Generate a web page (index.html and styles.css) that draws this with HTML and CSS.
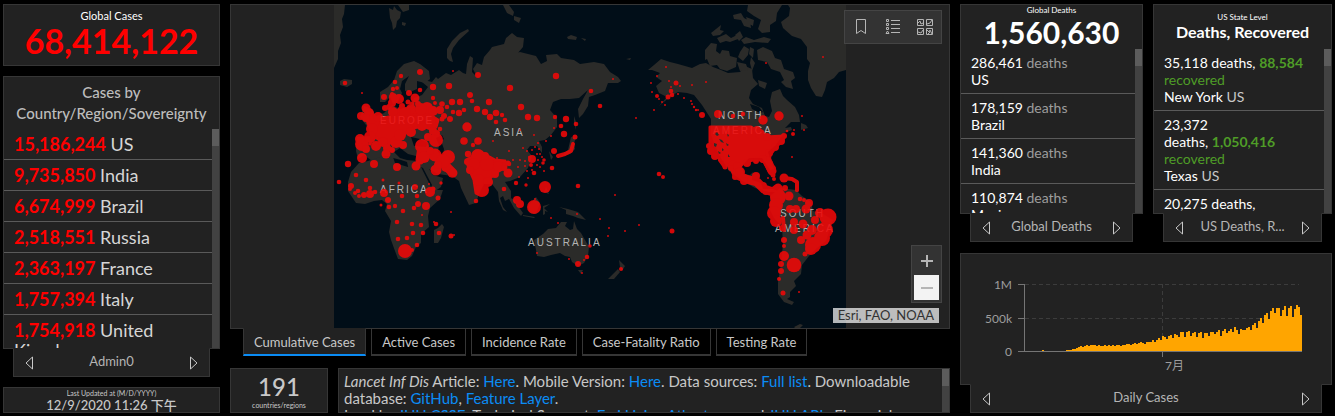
FILE: index.html
```html
<!DOCTYPE html>
<html lang="en">
<head>
    <meta charset="UTF-8">
    <meta name="viewport" content="width=device-width, initial-scale=1.0">
    <title>COVID-19 Dashboard</title>
    <link rel="stylesheet" href="styles.css">
</head>
<body>
<div class="dashboard">
    <div class="column left">
        <section class="card total">
            <h2 class="total-title">Global Cases</h2>
            <p class="total-number">68,414,122</p>
        </section>
        <section class="stack grow">
            <div class="card panel">
                <h2 class="panel-title">Cases by Country/Region/Sovereignty</h2>
                <div class="scroll">
                    <ul class="list cases">
                        <li><b>15,186,244</b> US</li>
                        <li><b>9,735,850</b> India</li>
                        <li><b>6,674,999</b> Brazil</li>
                        <li><b>2,518,551</b> Russia</li>
                        <li><b>2,363,197</b> France</li>
                        <li><b>1,757,394</b> Italy</li>
                        <li><b>1,754,918</b> United Kingdom</li>
                    </ul>
                    <div class="bar"></div>
                </div>
            </div>
            <nav class="switch">
                <button aria-label="Previous"><svg width="8" height="14" viewBox="0 0 8 14"><path d="M7.500 1v12L1 7z"/></svg></button>
                <span>Admin0</span>
                <button aria-label="Next"><svg width="8" height="14" viewBox="0 0 8 14"><path d="M.5 1v12L7 7z"/></svg></button>
            </nav>
        </section>
        <section class="card updated">
            <h2>Last Updated at (M/D/YYYY)</h2>
            <p>12/9/2020 11:26 下午</p>
        </section>
    </div>

    <div class="column middle">
        <section class="stack grow">
            <div class="card map">
                <svg class="world" viewBox="334 5 512 323">
                    <rect class="sea" x="334" y="5" width="512" height="323"/>
                    <g class="land">
                        <!-- greenland edge, svalbard, arctic islands, iceland -->
                        <path d="M334 5h11l-1 9-2 5 1 8-3 8 1 8-3 8v8l-4 9z"/>
                        <path d="M389 8l4 2 1-4 3 4 4 2-1 6-3 3-1 6-3 3-1-7-2-5zM398 5h11v5l-6 2zM402 22l4 1-1 3-3-1z"/>
                        <path d="M503 5h6l5 7-1 4-6-3zM514 16l7 2-2 5-5-3zM567 37l4-2 6 2-1 3-8-1zM581 38l5 1-1 2zM626 59l5-1-1 2z"/>
                        <path d="M468 29l-8 4-8 8-5 8v9l3 3 3 1-2-8 2-6 6-8 10-9zM340 81l4-2 8 1v4l-5 3-7-2z"/>
                        <!-- scandinavia -->
                        <path d="M380 102v-10l8-5 6-7 3-9 7-7 10-3 6 3 9 7 1 8-5 4-8-2v8l-7 3-5-1v-7l4-8-7 5-2 8 2 4-5 10-4 1-3-7-5 5z"/>
                        <!-- europe and asia -->
                        <path d="M356 151l1-14 13-1-1-7-9-12 4-11 8 3 4 7 8-3 8-8 8 4 12-4 2-7 8-3 6-8-6-5 2-2 8 2 4-5 2 2 8-6 5 2 8-5 4 3 3 1 1-10 3-8 3 2-1 14 5 5-4-8 4-6 5 2 2-8 6-7 2-3 12-3 2-6 6-5 5 4 7 1-1 9-6 7-6 1 9-3 8 2 8 2 5 8 6-3-1-6 11-1 4 4 13 2 6 4 14-2 10 2 6 8 8 5 3 4-3 2-10 0-3 8-10 4-6 2-1 9-5 8-4 4-1-9 5-10 5-9-9 8-9 1h-9l-8 3-3 8 7 8 0 9-6 8-6 5-6 1 3 6v6l-5-7-7 0-3 4 5 6-4 12-8 9-10 4-5 1 6 9v7l-6 3-2-5-3 2 3 9 4 5-4-2-4-9-1-9-6-8-8 0-5 10-3 9-7 2-8-17-2-7-7-5-14-2-9-5 4 6 10 3-2 9-10 7-8 2-6-11-8-14-2-9-6-2-8-2-6-2-8 2-7 3-8-6-6 4z"/>
                        <path d="M574 116l2 6v8l-2-8zM571 137l5 1-2 5 1 6-5 5-10 3 8-7zM549 151l4 6-2 3z"/>
                        <!-- africa and madagascar -->
                        <path d="M351 172l8-9 9-2 12-4h13l2 6 13 4 12-1 5 12 6 9 3 3h9l-3 9-10 9-2 8 1 11-8 7v9l-5 4-4 9-5 4-9-1-3-8-4-11-2-8 2-11-6-10 2-7-5-4-8 1-9 3-9-1-8-12v-9zM434 230l4-2 4-4 2 3-3 11-3 5h-4z"/>
                        <!-- indonesia, australia, new zealand -->
                        <path d="M508 197l5 2 10 14-2 3-7-8zM523 215l12 2-1 1-11-2zM528 206l8-9 4 6-4 11-6-1zM543 206l7-2-6 4 4 4-3-1v3l-2 1zM546 187l3 7-5-2zM559 207l9 2 10 3 8 8-8-2-5-2-7-2 0-4z"/>
                        <path d="M534 240l9-6 5-5 8-1 5-6h6l-2 4 5 4 3-1 1-8 3 8 4 4 4 7 4 7-1 9-4 7-6 3-6-4-2-5-5-1-5-3-9 2-7 2-7-1-1-6zM578 270h5l-2 4zM619 260l6 6-3 5-2-4zM618 269l2 3-6 7h-6z"/>
                        <!-- north america -->
                        <path d="M648 70l6-5 7-6 9 3 8 2 14 4 8-4 6-1 7 4 8 3 7 3 12-1 5-6 7 3 1 9 5 6-7 6-2 8 4 6 9 4 3 8 4 1 3-6-2-10 2-9 8-3 3 7 4 4 8 7 4 8 1 7-9 0-6 6 6-1 1 3-8 3-8 12-8 7 6 17-4 1-8-12h-13l-7 8 2 8 6 1 3-3-1 8 9 3 2 6 10 0 8 3-12 0-14-4-14-8-12-9-10-16-8-20 0-16-9-14-8-10-7-2-9-1-7 4-12 10 8-9-8-4-3-7 6-5-6-4 4-4-8-3z"/>
                        <path d="M801 123l5 2 2 3-7 2zM757 50l6-3 9 4 3 7 6 2 3 9 9 3 2 6-4 3 2 8-7-2-5-5 3-2-4-8-9-3-4-7-9-2zM705 50l6-7 6 1-1 7 4 3 2-4 7 1 1 5 7 2-1 9-9 4-7-2-3-4-7 1-3-7-2 1zM711 33l5-4 5-4-1 5 4 1-4 4-7 1zM717 38l9-4 5 4 6-3 1 4-8 3-4-1-6 2zM735 35l5-4 3 6-4 4zM741 40l5-3 8 3 10-3 7 2-3 4-13-1-11 2zM740 52l4-6 5 3-1 6-5 6-5-4zM750 47l4 2-1 9-4-4zM748 5h34l-5 8-1 8-6 4v7l-8 1-4-4 3-9-7-4-7-5zM733 15l8-2 3 5 6 3 1 7-7-2-3-6-7-1zM746 17l8 3-1 6-5-3zM737 62l9 2 2 6-8 1zM751 57l4 6-3 8-2-8zM758 80l9 3-2 6-6-3z"/>
                        <path d="M788 5h58v65l-7 2-5 6-7 4-2 8-3 7-6-1-5-8-3-8 0-9 2-8-3-4v-12l-6-8-9-3-9-8-2-6 8-6 1-8z"/>
                        <!-- south america -->
                        <path d="M770 196l10-8 16 2 6 6 9 6 2 9 10 3 10 6-3 9-4 12-9 7-8 8-7 9-1 9-7 7 2 5-6 6 0 5-3 2 7 3-2 3-8-3-6-8 0-12 3-18 2-20-1-17-8-9-4-8zM794 327l6-3 3 1-3 3-3 2z"/>
                    </g>
                    <g class="sea">
                        <path d="M436 138l6-3 2 4-3 2 3 8-1 6-5-3 1-7zM411 137l9 2 8 4-2 4-12-1zM394 152l6-4 8 6 8 2 1 5-10-1-7-2zM750 104l9 3 4 5-3 1-8-4zM421 167l2 1 9 17-1 2zM400 107l8-4 1-6-5 3z"/>
                    </g>
                    <g class="names">
                        <text x="380" y="124">EUROPE</text>
                        <text x="494" y="136">ASIA</text>
                        <text x="380" y="193">AFRICA</text>
                        <text x="528" y="246">AUSTRALIA</text>
                        <text x="718" y="119">NORTH</text>
                        <text x="713" y="134">AMERICA</text>
                        <text x="780" y="217">SOUTH</text>
                        <text x="775" y="232">AMERICA</text>
                    </g>
                    <g class="dots" id="dots">
                        <path d="M370 144l3-9 3-11 8-6 10-2 6-8 8 6 10-3 12 4 8 5-2 7-5 2-8-3-10 2-6 4-5 4-4 6-8 1-4 3-5-5-7-5z"/>
                        <path d="M466 160l6-3 4-6 8 3 11 6 10 1 1 6-9 5-6 5-4 7-1 8-5 3-5-2-2-13-4-9z"/>
                        <path d="M710 127l41 0 14 10 19-1-1 4-7 7-6 8-1 8 4 9-4-1-5-9-6-3-14 3-5 6-10-2-8-6-7-8-4-9z"/>
                        <path class="trail wide" d="M422 147l-2 13M435 155l10 10 8 8M733 165l4 10 9 4 11 3 7 7 9 3 5-4M767 160l5 11"/>
                        <path class="trail" d="M558 156l7-2 6-3 2-7M720 160l5 7M784 178l8 1 5 3 0 8M391 102l1-8M783 218l1 12"/>
                    </g>
                    <!-- bare patches in the western states -->
                    <path class="land" d="M715 134l2-2 2 3-2 1zM719 139l3 1 2 3-3-1zM714 143l3 1-1 3-2-1zM722 148l2 2-2 1zM726 143l3 2-2 1zM718 151l3 2-2 1zM727 134l2 1-1 2zM728 154l2 3-2 0z"/>
                </svg>
                <div class="tools">
                    <button aria-label="Bookmarks"><svg width="18" height="18" viewBox="0 0 18 18"><path d="M4.500 1.500h9v14L9 12.500l-4.500 3z"/></svg></button>
                    <button aria-label="Legend"><svg width="18" height="18" viewBox="0 0 18 18"><path d="M7 2.500h9M7 6.500h9M7 10.500h9M7 14.500h9M2.500 1.500h2v2h-2zM2.500 5.500h2v2h-2zM2.500 9.500h2v2h-2zM2 15.500h3L3.500 13z"/></svg></button>
                    <button aria-label="Basemaps"><svg width="18" height="18" viewBox="0 0 18 18"><path d="M1.500 1.500h6v6h-6zM10.500 1.500h6v6h-6zM1.500 10.500h6v6h-6zM10.500 10.500h6v6h-6zM2 5l2-2 1 3 2-1M11 6l3-1 2-3M2 14l3 1 2-3M11 12l2 2 1-2 2 4M12 16l2-2"/></svg></button>
                </div>
                <div class="zoom">
                    <button aria-label="Zoom in"><svg width="14" height="14" viewBox="0 0 14 14"><path d="M1 7h12M7 1v12"/></svg></button>
                    <button class="off" aria-label="Zoom out"><svg width="14" height="14" viewBox="0 0 14 14"><path d="M1 7h12"/></svg></button>
                </div>
                <div class="credits">Esri, FAO, NOAA</div>
            </div>
            <nav class="tabs">
                <button class="on">Cumulative Cases</button>
                <button>Active Cases</button>
                <button>Incidence Rate</button>
                <button>Case-Fatality Ratio</button>
                <button>Testing Rate</button>
            </nav>
        </section>
        <div class="footer">
            <section class="card count">
                <p>191</p>
                <h2>countries/regions</h2>
            </section>
            <section class="card scroll about">
                <p><i>Lancet Inf Dis</i> Article: <a href="#">Here</a>. Mobile Version: <a href="#">Here</a>. Data sources: <a href="#">Full list</a>. Downloadable database: <a href="#">GitHub</a>, <a href="#">Feature Layer</a>.<br>
                Lead by <a href="#">JHU CSSE</a>. Technical Support: <a href="#">Esri Living Atlas team</a> and <a href="#">JHU APL</a>. Financial Support:</p>
                <div class="bar"></div>
            </section>
        </div>
    </div>

    <div class="column right">
        <div class="pair grow">
            <section class="stack">
                <div class="card panel">
                    <div class="head deaths">
                        <h2>Global Deaths</h2>
                        <p>1,560,630</p>
                    </div>
                    <div class="scroll">
                        <ul class="list">
                            <li>286,461 <span class="grey">deaths</span><br>US</li>
                            <li>178,159 <span class="grey">deaths</span><br>Brazil</li>
                            <li>141,360 <span class="grey">deaths</span><br>India</li>
                            <li>110,874 <span class="grey">deaths</span><br>Mexico</li>
                        </ul>
                        <div class="bar"></div>
                    </div>
                </div>
                <nav class="switch">
                    <button aria-label="Previous"><svg width="8" height="14" viewBox="0 0 8 14"><path d="M7.500 1v12L1 7z"/></svg></button>
                    <span>Global Deaths</span>
                    <button aria-label="Next"><svg width="8" height="14" viewBox="0 0 8 14"><path d="M.5 1v12L7 7z"/></svg></button>
                </nav>
            </section>
            <section class="stack">
                <div class="card panel">
                    <div class="head states">
                        <h2>US State Level</h2>
                        <p>Deaths, Recovered</p>
                    </div>
                    <div class="scroll">
                        <ul class="list">
                            <li>35,118 deaths,&nbsp;<span class="green"><b>88,584</b> recovered</span><br>New York <span class="light">US</span></li>
                            <li>23,372 deaths,&nbsp;<span class="green"><b>1,050,416</b> recovered</span><br>Texas <span class="light">US</span></li>
                            <li>20,275 deaths,</li>
                        </ul>
                        <div class="bar"></div>
                    </div>
                </div>
                <nav class="switch">
                    <button aria-label="Previous"><svg width="8" height="14" viewBox="0 0 8 14"><path d="M7.500 1v12L1 7z"/></svg></button>
                    <span>US Deaths, R...</span>
                    <button aria-label="Next"><svg width="8" height="14" viewBox="0 0 8 14"><path d="M.5 1v12L7 7z"/></svg></button>
                </nav>
            </section>
        </div>
        <section class="stack">
            <div class="card">
                <svg class="chart" viewBox="0 0 370 130">
                    <path class="grid" d="M64 30.500h274M64 64.500h274M201.500 30v68"/>
                    <g id="days"></g>
                    <path class="axis" d="M57 30.500h6.500M57 64.500h6.500M57 97.500h284M63.500 30v68M201.500 98v5"/>
                    <text x="51" y="35" text-anchor="end">1M</text>
                    <text x="51" y="69" text-anchor="end">500k</text>
                    <text x="51" y="102" text-anchor="end">0</text>
                    <text x="204" y="116">7月</text>
                </svg>
            </div>
            <nav class="switch">
                <button aria-label="Previous"><svg width="8" height="14" viewBox="0 0 8 14"><path d="M7.500 1v12L1 7z"/></svg></button>
                <span>Daily Cases</span>
                <button aria-label="Next"><svg width="8" height="14" viewBox="0 0 8 14"><path d="M.5 1v12L7 7z"/></svg></button>
            </nav>
        </section>
    </div>
</div>
<script src="script.js"></script>
</body>
</html>
```
FILE: styles.css
```css
*{
    box-sizing: border-box;
}
body{
    margin: 0;
    background: #000;
    color: #c8c8c8;
    font-family: Lato, "Noto Sans CJK SC", sans-serif;
    font-size: 14px;
}
h2,p,ul{
    margin: 0;padding: 0;
    font-weight: normal;
    list-style: none;
}
button{
    padding: 0;
    border: 0;
    background: none;
    color: inherit;
    font: inherit;
    cursor: pointer;
}
svg{
    display: block;
}
a{
    color: #0b8cf5;
    text-decoration: none;
}
.dashboard{
    display: grid;
    grid-template-columns: 217fr 720fr 372fr;
    gap: 10px;
    height: 100vh;
    padding: 4px 3px 3px;
}
.column,.stack{
    display: flex;
    flex-direction: column;
    min-width: 0;
    min-height: 0;
}
.left{
    gap: 10px;
}
.middle{
    gap: 12px;
}
.right{
    gap: 11px;
}
.grow{
    flex: 1;
}
.card{
    background: #222;
    border: 1px solid #363636;
}
.panel{
    flex: 1;
    display: flex;
    flex-direction: column;
    min-height: 0;
}

/* headline number */
.total{
    height: 62px;
    text-align: center;
    color: #fff;
}
.total-title{
    padding-top: 4px;
    font-size: 11px;
    line-height: 14px;
}
.total-number{
    font-size: 34px;
    line-height: 36px;
    font-weight: bold;
    color: #f00;
}

/* lists */
.panel-title{
    padding: 5px 10px;
    font-size: 15px;
    line-height: 21px;
    font-weight: 500;
    text-align: center;
    color: #bdbdbd;
}
.scroll{
    flex: 1;
    display: flex;
    min-height: 0;
    overflow: hidden;
}
.bar{
    flex: none;
    width: 7px;
    background: #424242;
}
.bar::before{
    content: '';
    display: block;
    height: 17px;
    background: #5c5c5c;
}
.list{
    flex: 1;
    line-height: 17px;
    color: #fff;
}
.list li{
    padding: 5px 10px;
    border-bottom: 1px solid #5a5a5a;
}
.cases{
    font-size: 18px;
    line-height: 20px;
    color: #d6d6d6;
}
.cases b{
    color: #f00;
}
.grey{
    color: #9d9d9d;
}
.light{
    color: #c8c8c8;
}
.green{
    color: #4f9d27;
}
.head{
    height: 44px;
    text-align: center;
    color: #fff;
}
.head h2{
    font-size: 8px;
    line-height: 10px;
}
.deaths p{
    font-size: 30px;
    line-height: 34px;
    font-weight: bold;
}
.states{
    padding-top: 7px;
}
.states p{
    font-size: 16px;
    line-height: 20px;
    font-weight: bold;
}

/* strip under a panel that pages through its views */
.switch{
    position: relative;
    display: flex;
    align-items: center;
    justify-content: space-between;
    height: 29px;
    margin: -1px 10px 0;
    padding: 0 11px 3px;
    background: #222;
    border: 1px solid #363636;
    border-top-color: #222;
    font-size: 13px;
    color: #b5b5b5;
}
.switch button{
    padding-top: 3px;
}
.switch path{
    fill: none;
    stroke: #c8c8c8;
}

.updated{
    height: 26px;
    text-align: center;
}
.updated h2{
    font-size: 7px;
    line-height: 10px;
}
.updated p{
    font-size: 13px;
    line-height: 14px;
    font-weight: 500;
}

/* map */
.map{
    position: relative;
    flex: 1;
    min-height: 0;
}
.world{
    width: 100%;
    height: 100%;
}
.sea{
    fill: #010e18;
}
.land{
    fill: #2b2b29;
}
.names{
    fill: #b4b4b4;
    font-family: "Liberation Sans", sans-serif;
    font-size: 10px;
    letter-spacing: 2px;
}
.dots{
    fill: #f00808;
    opacity: .88;
}
.dots path{
    stroke: #f00808;
    stroke-width: 3px;
    stroke-linejoin: round;
    stroke-linecap: round;
}
.dots .trail{
    fill: none;
    stroke-width: 4px;
}
.dots .wide{
    stroke-width: 9px;
}
.tools,.zoom{
    position: absolute;
    right: 7px;
    display: flex;
    background: #333;
    border: 1px solid #444;
}
.tools{
    top: 5px;
}
.tools button{
    display: grid;
    place-items: center;
    width: 32px;
    height: 32px;
}
.tools path{
    fill: none;
    stroke: #b5b5b5;
}
.zoom{
    bottom: 25px;
    flex-direction: column;
    gap: 2px;
    padding: 2px;
}
.zoom button{
    display: grid;
    place-items: center;
    width: 25px;
    height: 25px;
}
.zoom path{
    stroke: #b5b5b5;
    stroke-width: 2px;
}
.zoom .off{
    background: #f3f3f3;
}
.credits{
    position: absolute;
    right: 10px;
    bottom: 5px;
    padding: 0 5px;
    background: rgba(255,255,255,.7);
    color: #323232;
    font-size: 13px;
    line-height: 15px;
}
.tabs{
    display: flex;
    gap: 5px;
    padding: 0 13px;
    margin-top: -1px;
    position: relative;
}
.tabs button{
    height: 28px;
    padding: 0 10px;
    border: 1px solid #363636;
    border-bottom-width: 2px;
    font-size: 13px;
}
.tabs .on{
    background: #222;
    border-top-color: #222;
    border-bottom-color: #0b8cf5;
}

.footer{
    display: grid;
    grid-template-columns: 98fr 612fr;
    gap: 10px;
    height: 45px;
}
.count{
    text-align: center;
}
.count p{
    padding-top: 4px;
    font-size: 24px;
    line-height: 27px;
    font-weight: 500;
}
.count h2{
    font-size: 7px;
    line-height: 10px;
}
.about p{
    flex: 1;
    padding: 4px 5px;
    font-size: 15px;
    line-height: 17px;
}

.pair{
    display: grid;
    grid-template-columns: 183fr 179fr;
    grid-template-rows: 100%;
    gap: 10px;
    min-height: 0;
}
.chart{
    width: 100%;
}
.chart rect{
    fill: #ffa500;
    shape-rendering: crispEdges;
}
.chart text{
    fill: #9d9d9d;
    font-size: 12px;
}
.grid,.axis{
    fill: none;
    stroke: #3c3c3c;
    stroke-dasharray: 4 3;
}
.axis{
    stroke: #757575;
    stroke-dasharray: none;
}
```
FILE: script.js
```js
const svgNS='http://www.w3.org/2000/svg'

function addShape(parent,name,attrs){
    let el=document.createElementNS(svgNS,name)
    for(let key in attrs){
        el.setAttribute(key,attrs[key])
    }
    parent.appendChild(el)
}

// x, y, radius
let places=[
    // europe, russia
    [345,83,2.3],[420,72,3],[401,76,2.2],[395,82,2.3],[393,89,2.2],[397,88,2],[384,97,3],[409,93,3],
    [420,90,2.3],[415,98,4.5],[433,87,3.2],[449,86,3.2],[453,71,1],[478,75,3],[470,95,3],[472,101,2.3],
    [433,98,2.2],[435,103,2],[442,104,2.8],[452,102,3.2],[460,102,3.2],[489,102,3.2],[477,109,3.2],
    [485,112,3.2],[459,113,3.2],[464,110,2.3],[453,112,2.3],[490,117,3.2],[496,113,3.3],[502,115,2.2],
    [505,120,2.3],[496,122,2.3],[510,88,3.2],[521,107,3.2],[528,117,3.2],[537,118,3.2],[556,76,3.2],
    [555,117,2.2],[566,119,3.2],[561,126,2.3],[564,134,3.2],[576,124,2.3],[575,137,2.5],[450,119,3],
    [444,116,3],[366,108,4.5],[361,116,4],[362,144,7],[385,108,3],[362,93,1],[399,99,5],[440,129,2.3],
    [436,140,7],[403,145,4],[392,150,3],[427,108,6],[447,107,2.3],[434,125,3],[369,113,5],[373,121,7],
    [378,117,5],[372,129,6],[370,137,6],[366,149,4],[360,139,5],[376,146,5],[383,142,5],[387,148,4],
    [396,142,6],[400,135,6],[411,132,5],[422,126,5],[393,112,5],[392,103,4],[402,106,3],[408,102,2.5],
    [411,109,5],[421,109,6],[433,111,5],[440,110,4],[442,119,2.5],[437,133,3],[433,131,4],[428,137,4],
    [393,97,4],[389,107,3],[412,104,2.5],[418,104,3],[405,113,6],[430,120,6],[415,121,6],[366,118,4],
    // middle east, central and east asia
    [467,127,4.7],[464,141,3.8],[478,141,3.8],[473,145,2.2],[422,146,7],[448,157,7],[435,155,6.5],
    [362,158,5],[374,164,4],[348,164,3.2],[386,154,4.5],[397,167,4],[416,166,4.5],[468,154,3.2],
    [478,156,7],[532,159,4],[554,151,3],[436,170,5.5],[452,173,4.5],[446,167,5],[508,173,4.5],
    [424,157,6],[443,161,7],[438,165,4],[430,151,4],[487,164,7],[498,166,5],[474,164,6],[482,190,7],
    [479,180,6],[488,182,5],[470,170,4],[467,162,3],[485,156,4],[504,168,3],[509,164,2.3],[495,174,4],
    [516,183,2.2],[526,185,1.7],[534,173,2.3],[552,168,2.3],[544,160,1.8],[543,163,1.8],[531,165,2],
    [508,163,2.5],[554,128,1],[534,135,1],[551,136,1],[546,141,1],[493,141,1],[538,143,1],[520,130,1],
    [509,151,1],[523,148,1],[527,151,1],[497,158,1],[520,160,1],[525,161,1],[532,150,1],[535,147,1],
    [539,149,1],[540,154,1],[542,157,1],[538,160,1],[537,165,1],[540,167,1],[532,170,1],[527,171,1],
    [525,166,1],[518,167,1],[519,177,1],[528,178,1],[544,171,1],[513,160,1],[537,154,1],[529,157,1],
    // africa
    [339,182,2.3],[351,186,3],[350,189,2],[356,175,2.3],[366,180,2.3],[358,191,2.3],[364,195,3],
    [359,196,2],[355,193,2],[370,194,4],[375,192,2.3],[370,188,2.3],[383,180,1.5],[384,193,4],
    [388,200,3],[389,207,2.3],[381,205,1.5],[395,206,2.2],[399,183,1.5],[402,196,2.3],[415,187,3],
    [417,196,2.3],[418,204,3],[414,208,2.3],[403,211,2.3],[426,206,4],[430,192,5],[433,189,2.5],
    [438,198,2.5],[422,215,1],[429,184,1],[441,183,1.7],[397,222,2.3],[412,224,2.3],[421,225,2.3],
    [413,233,2.3],[423,233,2.3],[407,238,2.3],[398,239,2.3],[417,245,2.3],[405,251,7],[412,250,2],
    [436,224,2.3],[434,222,1],[439,233,2.3],[451,236,2.5],[454,235,1],[451,212,1],
    // south-east asia, oceania, pacific
    [476,201,2.3],[504,189,2.3],[578,186,2.3],[545,187,6],[517,200,4],[520,204,4],[534,207,7],
    [535,199,1],[551,218,1],[558,223,1],[577,214,1],[537,253,1],[578,264,3],[569,259,1],[584,260,1],
    [587,257,2.3],[590,246,1.8],[582,273,1],[659,174,2.3],[663,177,2],[615,195,1],[600,219,1],
    [609,228,1],[608,236,1],[625,231,1],[639,225,1],[672,231,2.5],[621,269,2],
    // north america
    [591,91,2.3],[600,106,2.3],[613,79,1],[666,67,1],[657,76,1],[669,81,1],[651,83,1],[676,83,2.5],
    [680,86,1],[692,85,1],[706,82,1],[671,91,2.3],[671,87,1],[652,92,1],[657,96,2],[668,97,2.5],
    [672,95,2.3],[678,94,1],[659,99,1],[662,102,1],[665,105,1],[654,110,1],[684,98,1],[691,101,1],
    [692,104,1],[694,107,1.2],[696,110,1.2],[698,110,1],[702,115,3],[718,114,4],[733,116,2.3],
    [743,114,2.3],[763,120,4.7],[779,116,4.7],[802,116,1],[766,63,1],[823,57,1],[636,118,1],
    [792,157,1],[804,130,1],[787,131,1.3],[793,134,2],[794,130,1],[757,130,4],[725,167,2.5],[731,168,3],
    [709,146,3],[711,151,4],[715,156,4],[721,159,3],[747,163,4],[756,161,3],[763,159,4],[769,153,4],
    [775,147,4],[781,141,4],[784,136,3],[769,164,4],[772,169,4],[737,166,4],[760,134,5],[767,137,4],
    // central and south america
    [756,176,4],[773,175,2.5],[774,179,2],[784,178,4.5],[797,186,2],[797,190,2],[768,178,1],
    [740,172,5],[735,177,3],[744,181,4],[763,186,4],[766,191,4],
    [778,190,5],[785,188,3],[789,196,4.5],[778,197,8],[776,205,7],[774,213,7],[776,221,6],[782,228,3],
    [784,240,3],[784,246,2],[784,256,5],[781,264,3],[781,271,3],[779,279,2],[783,293,2.5],
    [794,265,7.3],[799,292,1],[809,203,4],[800,199,2.3],[804,200,2],[806,209,4.5],[796,209,4],
    [790,209,4],[794,222,4],[803,224,4.5],[794,230,4],[815,220,4],[820,213,5],[828,217,8.5],
    [825,230,8],[822,238,8],[813,245,8],[811,249,6],[807,235,4.5],[801,240,4],[805,254,2.5],[812,230,5]
]
let dots=document.getElementById('dots')
places.forEach(function(p){
    addShape(dots,'circle',{cx:p[0],cy:p[1],r:p[2]})
})

// bar heights, two units of width each
let cases=[
    1,1,1,1,1,1,1,1,1,2,1,1,1,1,1,1,1,1,1,1,1,2,2,2,3,3,4,5,6,5,6,7,6,7,7,7,6,7,6,6,7,6,7,6,7,6,7,7,6,7,
    7,8,8,7,8,9,8,9,10,9,8,10,10,10,12,10,12,14,12,16,15,13,16,17,14,18,17,15,20,20,15,20,21,16,19,20,15,
    19,20,14,19,19,16,20,20,18,20,22,16,21,23,19,21,23,20,25,22,18,23,22,22,24,25,22,27,29,24,31,34,29,37,
    39,33,41,44,39,44,44,36,42,46,36,44,46,35,43,47,45,37,44
]
let days=document.getElementById('days')
cases.slice(0,139).forEach(function(h,i){
    addShape(days,'rect',{x:63+i*2,y:98-h,width:2,height:h})
})
```
